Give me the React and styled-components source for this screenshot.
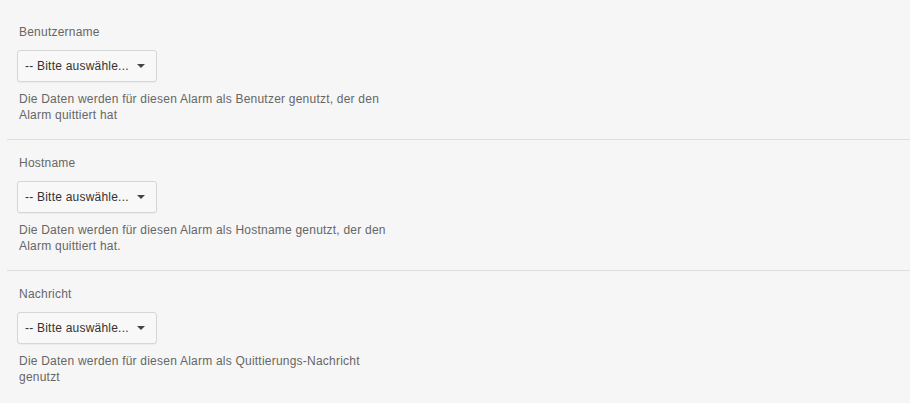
import React from "react";
import styled, { createGlobalStyle } from "styled-components";

const Global = createGlobalStyle`
  html, body { margin: 0; padding: 0; background: #f6f6f6; }
  body { font-family: "Liberation Sans", Arial, sans-serif; }
`;

const Page = styled.div`
  padding: 9px 0 0 7px;
  background: #f6f6f6;
  min-height: 403px;
  box-sizing: border-box;
  letter-spacing: 0.22px;
`;

const Section = styled.section`
  padding: 15px 0 16px 10px;
  border-bottom: ${(p) => (p.$last ? "none" : "1px solid #dddddd")};
`;

const Label = styled.div`
  padding-left: 2px;
  font-size: 12px;
  line-height: 16px;
  color: #666666;
`;

const Select = styled.div`
  margin-top: 10px;
  width: 140px;
  height: 32px;
  box-sizing: border-box;
  border: 1px solid #d6d6d6;
  border-radius: 3px;
  background: #f8f8f8;
  box-shadow: 0 1px 1px rgba(0, 0, 0, 0.04);
  display: flex;
  align-items: center;
  justify-content: space-between;
  padding: 0 11px 0 7px;
  font-size: 12px;
  color: #333333;
  cursor: pointer;
`;

const Caret = styled.span`
  width: 0;
  height: 0;
  border-left: 4px solid transparent;
  border-right: 4px solid transparent;
  border-top: 4px solid #444444;
`;

const Help = styled.p`
  margin: 9px 0 0;
  padding-left: 2px;
  max-width: 380px;
  font-size: 12px;
  line-height: 16px;
  color: #666666;
`;

const fields = [
  {
    label: "Benutzername",
    help: "Die Daten werden für diesen Alarm als Benutzer genutzt, der den Alarm quittiert hat",
  },
  {
    label: "Hostname",
    help: "Die Daten werden für diesen Alarm als Hostname genutzt, der den Alarm quittiert hat.",
  },
  {
    label: "Nachricht",
    help: "Die Daten werden für diesen Alarm als Quittierungs-Nachricht genutzt",
  },
];

export default function App() {
  return (
    <>
      <Global />
      <Page>
        {fields.map((f, i) => (
          <Section key={f.label} $last={i === fields.length - 1}>
            <Label>{f.label}</Label>
            <Select>
              <span>-- Bitte auswähle...</span>
              <Caret />
            </Select>
            <Help>{f.help}</Help>
          </Section>
        ))}
      </Page>
    </>
  );
}
